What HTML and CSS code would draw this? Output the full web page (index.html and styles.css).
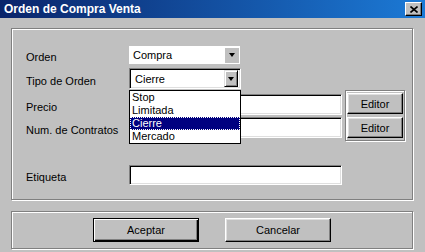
FILE: index.html
```html
<!DOCTYPE html>
<html lang="es">
<head>
    <meta charset="UTF-8">
    <title>Orden de Compra Venta</title>
    <link rel="stylesheet" href="styles.css">
</head>
<body>
    <div class="window">
        <div class="title-bar">
            <span class="title">Orden de Compra Venta</span>
            <button class="close-btn" type="button">
                <svg width="8" height="7" viewBox="0 0 8 7">
                    <path d="M0.5 0.5 L7.5 6.5 M7.5 0.5 L0.5 6.5" stroke="#000" stroke-width="1.6"/>
                </svg>
            </button>
        </div>

        <div class="client">
            <div class="group main-group">
                <div class="row">
                    <label>Orden</label>
                    <div class="combo combo-flat">
                        <span class="combo-value">Compra</span>
                        <span class="combo-arrow"></span>
                    </div>
                </div>

                <div class="row row-tipo">
                    <label>Tipo de Orden</label>
                    <div class="combo combo-open">
                        <span class="combo-value">Cierre</span>
                        <span class="combo-arrow raised"></span>
                        <!-- lista desplegada -->
                        <ul class="dropdown">
                            <li>Stop</li>
                            <li>Limitada</li>
                            <li class="selected">Cierre</li>
                            <li>Mercado</li>
                        </ul>
                    </div>
                </div>

                <div class="pair">
                    <div class="pair-fields">
                        <div class="row">
                            <label>Precio</label>
                            <input type="text" class="text-input">
                        </div>
                        <div class="row">
                            <label>Num. de Contratos</label>
                            <input type="text" class="text-input">
                        </div>
                    </div>
                    <div class="editor-box">
                        <button class="btn editor-btn" type="button">Editor</button>
                        <button class="btn editor-btn" type="button">Editor</button>
                    </div>
                </div>

                <div class="row row-etiqueta">
                    <label>Etiqueta</label>
                    <input type="text" class="text-input etiqueta-input">
                </div>
            </div>

            <div class="group button-group">
                <button class="btn btn-default" type="button">Aceptar</button>
                <button class="btn" type="button">Cancelar</button>
            </div>
        </div>
    </div>
</body>
</html>
```

FILE: styles.css
```css
body {
    margin: 0;
    background: #c0c0c0;
    font-family: "Liberation Sans", Arial, sans-serif;
    font-size: 11px;
    color: #000;
}

.window {
    width: 425px;
    height: 252px;
    overflow: hidden;
}

.title-bar {
    height: 18px;
    display: flex;
    align-items: center;
    justify-content: space-between;
    padding: 0 3px 0 4px;
    background: linear-gradient(to right, #0a246a, #1c7ad6);
    color: #fff;
}

.title {
    font-weight: bold;
    font-size: 12px;
}

.close-btn {
    width: 17px;
    height: 14px;
    padding: 0;
    background: #c0c0c0;
    border: 1px solid;
    border-color: #fff #000 #000 #fff;
    box-shadow: inset -1px -1px #808080;
    display: flex;
    align-items: center;
    justify-content: center;
}

.client {
    padding: 10px 12px 0 11px;
}

/* marco grabado */
.group {
    border: 1px solid #808080;
    box-shadow: inset 1px 1px #fff, 1px 1px #fff;
    box-sizing: border-box;
}

.main-group {
    height: 172px;
    padding: 17px 0 0 14px;
}

.row {
    display: flex;
    align-items: center;
}

.row label {
    width: 103px;
    flex: none;
    padding-top: 4px;
}

.row-tipo {
    margin-top: 4px;
}

.row-etiqueta {
    margin-top: 24px;
}

.combo {
    position: relative;
    display: flex;
    align-items: center;
    box-sizing: border-box;
    background: #fff;
}

.combo-value {
    padding-left: 3px;
}

.combo-flat {
    width: 111px;
    height: 18px;
    padding: 1px;
}

.combo-open {
    width: 112px;
    height: 21px;
    border: 1px solid;
    border-color: #808080 #fff #fff #808080;
    box-shadow: inset 1px 1px #000, inset -1px -1px #dfdfdf;
    padding: 2px;
}

.combo-arrow {
    margin-left: auto;
    width: 14px;
    height: 15px;
    background: #c0c0c0;
    display: flex;
    align-items: center;
    justify-content: center;
    box-sizing: border-box;
}

.combo-arrow::after {
    content: "";
    border-left: 3.5px solid transparent;
    border-right: 3.5px solid transparent;
    border-top: 4px solid #000;
}

.combo-arrow.raised {
    height: 17px;
    border: 1px solid;
    border-color: #dfdfdf #000 #000 #dfdfdf;
    box-shadow: inset 1px 1px #fff, inset -1px -1px #808080;
}

.dropdown {
    position: absolute;
    top: calc(100% + 2px);
    left: -1px;
    width: 112px;
    box-sizing: border-box;
    margin: 0;
    padding: 0;
    list-style: none;
    background: #fff;
    border: 1px solid #000;
    z-index: 2;
}

.dropdown li {
    height: 13px;
    line-height: 13px;
    padding: 0 2px;
}

.dropdown li.selected {
    background: #000080;
    color: #fff;
    outline: 1px dotted #fff;
    outline-offset: -1px;
}

.pair {
    display: flex;
    margin-top: 1px;
}

.pair-fields {
    display: flex;
    flex-direction: column;
    gap: 2px;
    padding-top: 4px;
}

.text-input {
    width: 213px;
    height: 21px;
    box-sizing: border-box;
    margin: 0;
    padding: 0 3px;
    border: 1px solid;
    border-color: #808080 #fff #fff #808080;
    box-shadow: inset 1px 1px #000, inset -1px -1px #dfdfdf;
    background: #fff;
    font: inherit;
}

.etiqueta-input {
    height: 20px;
}

.editor-box {
    margin-left: 3px;
    width: 60px;
    height: 51px;
    box-sizing: border-box;
    padding: 2px 1px;
    border: 1px solid #808080;
    box-shadow: inset 1px 1px #fff, 1px 1px #fff;
    display: flex;
    flex-direction: column;
    gap: 3px;
}

.btn {
    background: #c0c0c0;
    border: 1px solid;
    border-color: #fff #000 #000 #fff;
    box-shadow: inset -1px -1px #808080, inset 1px 1px #dfdfdf;
    padding: 0;
    font: 11px "Liberation Sans", Arial, sans-serif;
    color: #000;
    box-sizing: border-box;
}

.editor-btn {
    width: 56px;
    height: 21px;
}

.button-group {
    margin-top: 11px;
    height: 38px;
    display: flex;
    justify-content: center;
    align-items: center;
    gap: 26px;
}

.button-group .btn {
    width: 106px;
    height: 24px;
}

.btn-default {
    border-color: #000;
    box-shadow: inset 1px 1px #fff, inset -1px -1px #000, inset -2px -2px #808080;
}
```
